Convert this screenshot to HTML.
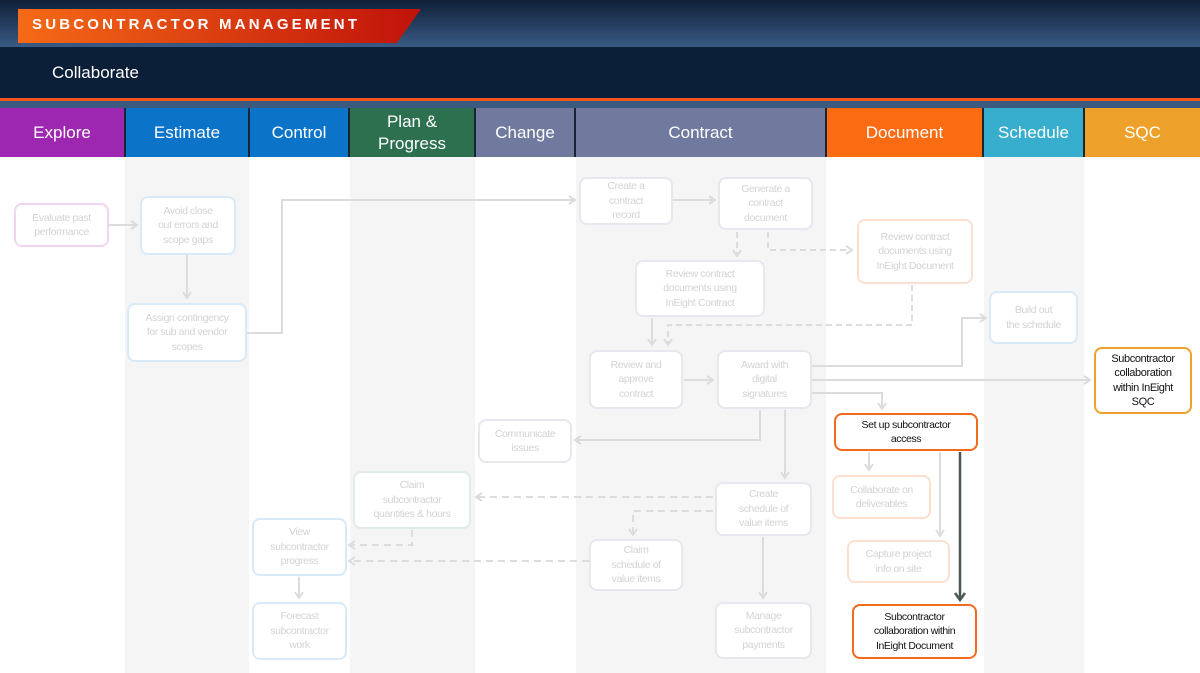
<!DOCTYPE html>
<html><head><meta charset="utf-8"><style>
*{margin:0;padding:0;box-sizing:border-box}
body{width:1200px;height:673px;overflow:hidden;background:#fff;font-family:"Liberation Sans",sans-serif;position:relative}
.abs{position:absolute}
.hd{position:absolute;top:108px;height:49px;color:#fff;font-size:17px;display:flex;align-items:center;justify-content:center;text-align:center;line-height:22px;border-right:2px solid #1a2433}
.col{position:absolute;top:157px;bottom:0;background:#f5f5f5}
.b{position:absolute;border:2px solid #e6e7ef;border-radius:8px;background:#fff;color:#d3d3d3;font-size:10.5px;line-height:14.5px;display:flex;align-items:center;justify-content:center;text-align:center;padding:0 1px;white-space:nowrap;letter-spacing:-0.4px}
.bl{border-color:#d8e9f7}.of{border-color:#fbdfcf}.pu{border-color:#efd5f1}.gr{border-color:#dfebe8}
.on{border-color:#f26a1b;color:#111;}
.sq{border-color:#eea12a;color:#111;font-size:11px}
</style></head><body>
<div class="abs" style="left:0;top:0;width:1200px;height:47px;background:linear-gradient(#0f2038,#3a5a84)"></div>
<div class="abs" style="left:18px;top:9px;width:403px;height:34px;background:linear-gradient(90deg,#f56a17,#c0120a);clip-path:polygon(0 0,100% 0,94% 100%,0 100%)"></div>
<div class="abs" style="left:32px;top:16px;color:#fff;font-weight:bold;font-size:15px;letter-spacing:3.2px">SUBCONTRACTOR MANAGEMENT</div>
<div class="abs" style="left:0;top:47px;width:1200px;height:51px;background:#0b1f38"></div>
<div class="abs" style="left:52px;top:63px;color:#fff;font-size:17px">Collaborate</div>
<div class="abs" style="left:0;top:98px;width:1200px;height:3px;background:#f0531e"></div>
<div class="abs" style="left:0;top:101px;width:1200px;height:7px;background:#3c5a80"></div>
<div class="hd" style="left:0;width:126px;background:#9d27b0">Explore</div>
<div class="hd" style="left:126px;width:124px;background:#0b73c8">Estimate</div>
<div class="hd" style="left:250px;width:100px;background:#0b73c8">Control</div>
<div class="hd" style="left:350px;width:126px;background:#2d7050">Plan &amp;<br>Progress</div>
<div class="hd" style="left:476px;width:100px;background:#6f7a9e">Change</div>
<div class="hd" style="left:576px;width:251px;background:#6f7a9e">Contract</div>
<div class="hd" style="left:827px;width:157px;background:#fb6b12">Document</div>
<div class="hd" style="left:984px;width:101px;background:#37aecd">Schedule</div>
<div class="hd" style="left:1085px;width:115px;background:#eea12a;border-right:none">SQC</div>
<div class="col" style="left:125px;width:124px"></div>
<div class="col" style="left:350px;width:125px"></div>
<div class="col" style="left:576px;width:250px"></div>
<div class="col" style="left:984px;width:100px"></div>
<svg class="abs" style="left:0;top:0" width="1200" height="673">
<defs><marker id="a" markerWidth="10" markerHeight="10" refX="7" refY="5" orient="auto" markerUnits="userSpaceOnUse"><path d="M1,1 L7,5 L1,9" fill="none" stroke="#dcdcdc" stroke-width="2"/></marker>
<marker id="d" markerWidth="12" markerHeight="12" refX="8" refY="6" orient="auto" markerUnits="userSpaceOnUse"><path d="M1,1 L8,6 L1,11" fill="none" stroke="#4a5656" stroke-width="2.5"/></marker></defs>
<g fill="none" stroke="#dcdcdc" stroke-width="2" marker-end="url(#a)">
<path d="M108 225H137"/><path d="M187 254V298"/><path d="M246 333H282V200H575"/><path d="M672 200H715"/>
<path d="M737 232V256" stroke-dasharray="6 4"/><path d="M768 232V250H852" stroke-dasharray="6 4"/>
<path d="M652 318V345"/><path d="M912 285V325H668V345" stroke-dasharray="6 4"/>
<path d="M684 380H713"/><path d="M811 366H962V318H986"/><path d="M811 380H1090"/><path d="M811 393H882V409"/>
<path d="M760 410V440H575"/><path d="M785 410V478"/>
<path d="M713 497H476" stroke-dasharray="7 5"/><path d="M713 511H633V535" stroke-dasharray="7 5"/>
<path d="M412 530V545H349" stroke-dasharray="7 5"/><path d="M589 561H349" stroke-dasharray="7 5"/>
<path d="M299 577V598"/><path d="M763 537V598"/><path d="M869 452V470"/><path d="M940 452V536"/>
</g>
<path d="M960 452V600" stroke="#4a5656" stroke-width="2.5" fill="none" marker-end="url(#d)"/>
</svg>
<div class="b pu" style="left:14px;top:203px;width:95px;height:44px">Evaluate past<br>performance</div>
<div class="b bl" style="left:140px;top:196px;width:96px;height:59px">Avoid close<br>out errors and<br>scope gaps</div>
<div class="b bl" style="left:127px;top:303px;width:120px;height:59px">Assign contingency<br>for sub and vendor<br>scopes</div>
<div class="b" style="left:579px;top:177px;width:94px;height:48px">Create a<br>contract<br>record</div>
<div class="b" style="left:718px;top:177px;width:95px;height:53px">Generate a<br>contract<br>document</div>
<div class="b of" style="left:857px;top:219px;width:116px;height:65px">Review contract<br>documents using<br>InEight Document</div>
<div class="b" style="left:635px;top:260px;width:130px;height:57px">Review contract<br>documents using<br>InEight Contract</div>
<div class="b" style="left:589px;top:350px;width:94px;height:59px">Review and<br>approve<br>contract</div>
<div class="b" style="left:717px;top:350px;width:95px;height:59px">Award with<br>digital<br>signatures</div>
<div class="b bl" style="left:989px;top:291px;width:89px;height:53px">Build out<br>the schedule</div>
<div class="b sq" style="left:1094px;top:347px;width:98px;height:67px">Subcontractor<br>collaboration<br>within InEight<br>SQC</div>
<div class="b on" style="left:834px;top:413px;width:144px;height:38px">Set up subcontractor<br>access</div>
<div class="b" style="left:478px;top:419px;width:94px;height:44px">Communicate<br>issues</div>
<div class="b gr" style="left:353px;top:471px;width:118px;height:58px">Claim<br>subcontractor<br>quantities &amp; hours</div>
<div class="b" style="left:715px;top:482px;width:97px;height:54px">Create<br>schedule of<br>value items</div>
<div class="b" style="left:589px;top:539px;width:94px;height:52px">Claim<br>schedule of<br>value items</div>
<div class="b bl" style="left:252px;top:518px;width:95px;height:58px">View<br>subcontractor<br>progress</div>
<div class="b bl" style="left:252px;top:602px;width:95px;height:58px">Forecast<br>subcontractor<br>work</div>
<div class="b" style="left:715px;top:602px;width:97px;height:57px">Manage<br>subcontractor<br>payments</div>
<div class="b of" style="left:832px;top:475px;width:99px;height:44px">Collaborate on<br>deliverables</div>
<div class="b of" style="left:847px;top:540px;width:103px;height:43px">Capture project<br>info on site</div>
<div class="b on" style="left:852px;top:604px;width:125px;height:55px">Subcontractor<br>collaboration within<br>InEight Document</div>
</body></html>
